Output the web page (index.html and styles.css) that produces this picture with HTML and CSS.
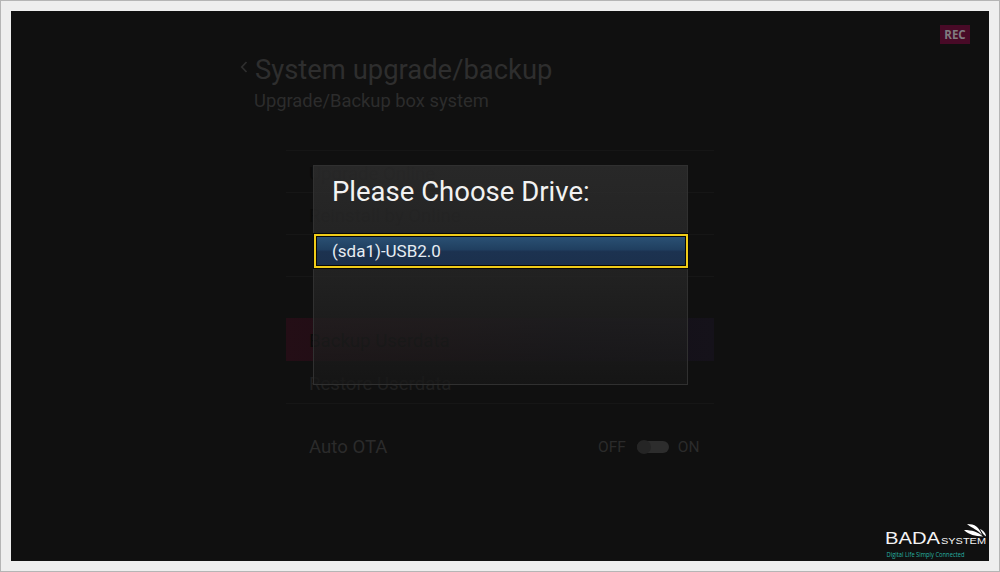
FILE: index.html
```html
<!DOCTYPE html>
<html lang="en">
<head>
    <meta charset="UTF-8">
    <meta name="viewport" content="width=device-width, initial-scale=1.0">
    <title>System upgrade/backup</title>
    <link rel="stylesheet" href="styles.css">
</head>
<body>

    <div class="frame">
        <div class="screen">
            <div class="rec">REC</div>

            <header class="header">
                <svg class="back" width="8" height="12" viewBox="0 0 8 12">
                    <path d="M6.5 1 L1.8 6 L6.5 11" fill="none" stroke="#2e2e2e" stroke-width="1.8"/>
                </svg>
                <div>
                    <h1 class="title">System upgrade/backup</h1>
                    <p class="subtitle">Upgrade/Backup box system</p>
                </div>
            </header>

            <ul class="menu">
                <li class="line dim">Upgrade Online</li>
                <li class="line dim">Reinstall by Online</li>
                <li class="line"></li>
                <li class="line"></li>
                <li class="active dim">Backup Userdata</li>
                <li>Restore Userdata</li>
                <li class="line ota">
                    <span class="ota-label">Auto OTA</span>
                    <span class="off">OFF</span>
                    <span class="switch"><span class="knob"></span></span>
                    <span class="on">ON</span>
                </li>
            </ul>

            <div class="dialog">
                <h2 class="dialog-title">Please Choose Drive:</h2>
                <div class="drive">(sda1)-USB2.0</div>
            </div>

            <svg class="logo" width="104" height="38" viewBox="0 0 104 38">
                <text class="logo-name" x="0" y="21" textLength="55" lengthAdjust="spacingAndGlyphs">BADA</text>
                <text class="logo-system" x="56" y="21" textLength="45" lengthAdjust="spacingAndGlyphs">SYSTEM</text>
                <path d="M82 1 C90 1 94 4 97 12 C92 6 88 6 82 1 Z" fill="#fff"/>
                <path d="M79 7 C87 7 93 9 98 13.5 C90 13 84 12 79 7 Z" fill="#fff"/>
                <path d="M95 6 C98 7.5 101 10 101 13.5 C98 12 97 9 95 6 Z" fill="#fff"/>
                <text class="logo-line" x="1.5" y="34" textLength="78" lengthAdjust="spacingAndGlyphs">Digital Life Simply Connected</text>
            </svg>
        </div>
    </div>

</body>
</html>
```

FILE: styles.css
```css
* {
    box-sizing: border-box;
}

body {
    margin: 0;
    overflow: hidden;
    font-family: Roboto, "Liberation Sans", sans-serif;
}

h1, h2, p, ul {
    margin: 0;
    padding: 0;
    font-weight: 400;
}

.frame {
    width: 1000px;
    height: 572px;
    padding: 10px;
    border: 1px solid #b5b5b5;
    background: #eee;
}

.screen {
    position: relative;
    width: 978px;
    height: 550px;
    background: #101010;
    overflow: hidden;
}

.rec {
    position: absolute;
    top: 14px;
    right: 19px;
    width: 30px;
    height: 19px;
    background: #480a27;
    color: #807b80;
    font: 700 11.5px/19px "Open Sans", sans-serif;
    text-align: center;
}

.header {
    display: flex;
    gap: 7px;
    padding: 43px 0 0 229px;
}

.back {
    margin-top: 7px;
}

.title {
    color: #2e2e2e;
    font-size: 27.4px;
    line-height: 33px;
}

.subtitle {
    margin-top: 3px;
    margin-left: -1px;
    color: #2c2c2c;
    font-size: 18.35px;
    line-height: 22px;
}

.menu {
    width: 428px;
    margin: 38px 0 0 275px;
    list-style: none;
    color: #202020;
    font-size: 18.6px;
}

.menu li {
    height: 42px;
    padding-left: 23px;
    line-height: 46px;
}

.menu .line {
    border-top: 1px solid #161616;
}

.menu .dim {
    color: #0a0a0a;
}

.menu .active {
    height: 43px;
    background: linear-gradient(90deg, #240e16, #1d0d13 35%, #130e17 65%, #15121a);
}

.menu .ota {
    display: flex;
    align-items: center;
    height: 87px;
    color: #2b2b2b;
    line-height: 22px;
}

.ota-label {
    width: 289px;
}

.off,
.on {
    font-size: 15.5px;
}

.switch {
    width: 32px;
    height: 12px;
    margin: 0 9px 0 11px;
    border-radius: 6px;
    background: #2d2d2d;
}

.knob {
    display: block;
    width: 14px;
    height: 14px;
    margin-top: -1px;
    border-radius: 50%;
    background: #252525;
}

.dialog {
    position: absolute;
    top: 154px;
    left: 302px;
    width: 375px;
    height: 220px;
    border: 1px solid #303030;
    background: linear-gradient(rgba(48, 48, 48, .75), rgba(39, 39, 39, .75) 50%, rgba(23, 23, 23, .75));
}

.dialog-title {
    height: 68px;
    padding: 8px 0 0 18px;
    color: #f2f2f2;
    font-size: 27.5px;
    line-height: 36px;
}

.drive {
    width: 374px;
    height: 34px;
    padding-left: 16px;
    border: 2px solid #f0cc18;
    outline: 1px solid #080808;
    box-shadow: inset 0 0 0 1px #080808;
    background: linear-gradient(#2b5275, #203f60 45%, #1c3250 52%, #1b304c);
    color: #e6edf3;
    font-size: 17px;
    line-height: 31px;
}

.logo {
    position: absolute;
    right: 0;
    bottom: 0;
}

.logo text {
    fill: #f4f4f4;
    font-family: "Liberation Sans", sans-serif;
}

.logo .logo-name {
    font-size: 16px;
}

.logo .logo-system {
    font-size: 9.5px;
}

.logo .logo-line {
    fill: #27b0a1;
    font-family: "Open Sans", sans-serif;
    font-size: 6.2px;
}
```
